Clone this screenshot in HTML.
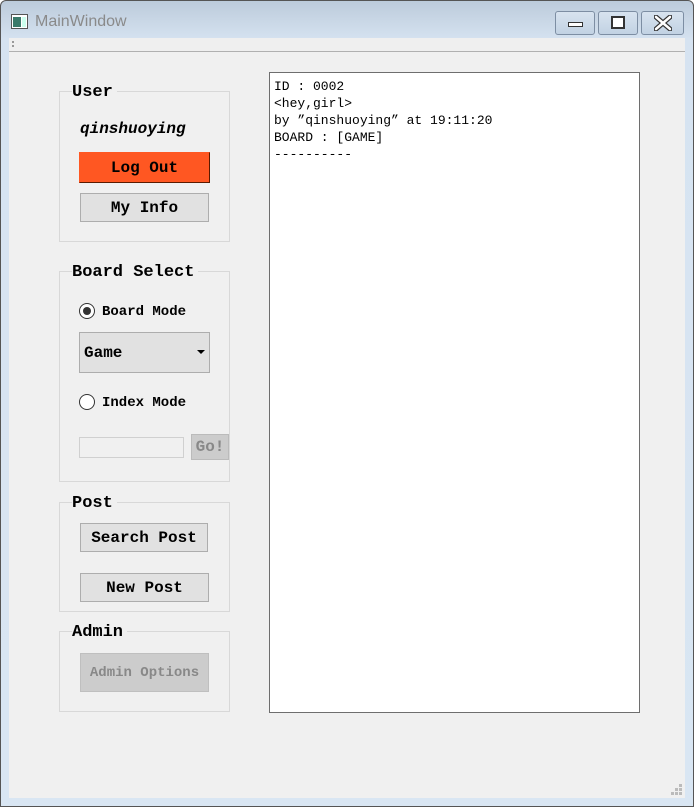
<!DOCTYPE html>
<html><head><meta charset="utf-8"><style>
*{margin:0;padding:0;box-sizing:border-box}
body{width:694px;height:807px;overflow:hidden;background:#fff;font-family:"Liberation Mono",monospace;position:relative}
.frame{position:absolute;left:0;top:0;width:694px;height:807px;border:1px solid #555;border-radius:6px 6px 0 0;background:linear-gradient(#bccbdb,#d6e3f1 40px,#d9e6f3)}
.client{position:absolute;left:9px;top:38px;width:676px;height:760px;background:#f0f0f0}
.tb{position:absolute;left:9px;top:38px;width:676px;height:14px;background:#efefef;border-bottom:1px solid #b0b0b0}
.a{position:absolute}
.grp{position:absolute;border:1px solid #d8d8d8;left:59px;width:171px}
.gt{position:absolute;left:72px;background:#f0f0f0;padding:0 4px 0 0;font-weight:bold;font-size:17px;line-height:18px;color:#000}
.btn{position:absolute;background:#e1e1e1;border:1px solid #adadad;font-weight:bold;font-size:16px;text-align:center;color:#000}
.lbl{position:absolute;font-weight:bold;font-size:14px;color:#000}
.radio{position:absolute;width:16px;height:16px;border-radius:50%;border:1px solid #333;background:#fff}
.wb{position:absolute;top:11px;height:24px;border:1px solid #7d8ea3;border-radius:3px;background:linear-gradient(#d8e3ef,#c2d2e3)}
.txt{position:absolute;left:269px;top:72px;width:371px;height:641px;background:#fff;border:1px solid #6e6e6e;padding:5px 4px;font-size:13px;line-height:17px;color:#000;white-space:pre}
</style></head><body>
<div class="frame"></div>
<svg class="a" style="left:11px;top:14px" width="17" height="15"><rect x="0.5" y="0.5" width="16" height="14" fill="#fff" stroke="#555"/><rect x="2" y="3" width="8" height="10" fill="#3a7a6a"/><rect x="11" y="3" width="4" height="10" fill="#cfe"/></svg>
<div class="a" style="left:35px;top:13px;font-family:'Liberation Sans',sans-serif;font-size:16px;color:#8a8a8a">MainWindow</div>
<div class="wb" style="left:555px;width:40px"><div class="a" style="left:12px;top:10px;width:15px;height:5px;border:1px solid #333;background:#fff"></div></div>
<div class="wb" style="left:598px;width:40px"><div class="a" style="left:12px;top:4px;width:14px;height:13px;border:2px solid #333;background:#fff"></div></div>
<div class="wb" style="left:641px;width:43px"><svg class="a" style="left:12px;top:3px" width="18" height="16"><path d="M2 2L16 14M16 2L2 14" stroke="#333" stroke-width="5" stroke-linecap="round"/><path d="M2 2L16 14M16 2L2 14" stroke="#fff" stroke-width="2.5" stroke-linecap="round"/></svg></div>
<div class="client"></div>
<div class="tb"><div class="a" style="left:3px;top:3px;width:2px;height:2px;background:#999"></div><div class="a" style="left:3px;top:7px;width:2px;height:2px;background:#999"></div></div>

<div class="grp" style="top:91px;height:151px"></div>
<div class="gt" style="top:84px">User</div>
<div class="a" style="left:80px;top:120px;font-family:'Liberation Mono';font-weight:bold;font-style:italic;font-size:16px">qinshuoying</div>
<div class="btn" style="left:79px;top:152px;width:131px;height:31px;background:#ff5722;border:1px solid #ff5722;border-right-color:#5a1a00;border-bottom-color:#5a1a00;line-height:30px">Log Out</div>
<div class="btn" style="left:80px;top:193px;width:129px;height:29px;line-height:28px">My Info</div>

<div class="grp" style="top:271px;height:211px"></div>
<div class="gt" style="top:264px">Board Select</div>
<div class="radio" style="left:79px;top:303px"><div class="a" style="left:3px;top:3px;width:8px;height:8px;border-radius:50%;background:#333"></div></div>
<div class="lbl" style="left:102px;top:304px">Board Mode</div>
<div class="btn" style="left:79px;top:332px;width:131px;height:41px;line-height:40px;text-align:left;padding-left:4px">Game</div>
<div class="a" style="left:197px;top:350px;border-left:4px solid transparent;border-right:4px solid transparent;border-top:4px solid #000"></div>
<div class="radio" style="left:79px;top:394px"></div>
<div class="lbl" style="left:102px;top:395px">Index Mode</div>
<div class="a" style="left:79px;top:437px;width:105px;height:21px;background:#f0f0f0;border:1px solid #d0d0d0"></div>
<div class="btn" style="left:191px;top:434px;width:38px;height:26px;line-height:25px;background:#ccc;border-color:#bbb;color:#888">Go!</div>

<div class="grp" style="top:502px;height:110px"></div>
<div class="gt" style="top:495px">Post</div>
<div class="btn" style="left:80px;top:523px;width:128px;height:29px;line-height:28px">Search Post</div>
<div class="btn" style="left:80px;top:573px;width:129px;height:29px;line-height:28px">New Post</div>

<div class="grp" style="top:631px;height:81px"></div>
<div class="gt" style="top:624px">Admin</div>
<div class="btn" style="left:80px;top:653px;width:129px;height:39px;line-height:38px;background:#ccc;border-color:#bfbfbf;color:#888;font-size:14px">Admin Options</div>

<div class="txt">ID : 0002
&lt;hey,girl&gt;
by ”qinshuoying” at 19:11:20
BOARD : [GAME]
----------</div>
<svg class="a" style="left:671px;top:784px" width="12" height="12" fill="#bbb"><rect x="8" y="0" width="3" height="3"/><rect x="4" y="4" width="3" height="3"/><rect x="8" y="4" width="3" height="3"/><rect x="0" y="8" width="3" height="3"/><rect x="4" y="8" width="3" height="3"/><rect x="8" y="8" width="3" height="3"/></svg>
</body></html>
